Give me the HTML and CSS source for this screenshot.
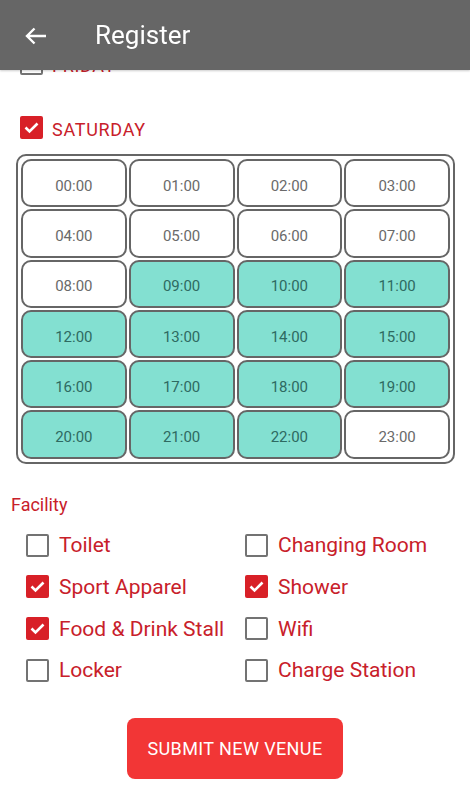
FILE: index.html
```html
<!DOCTYPE html>
<html lang="en">
<head>
  <meta charset="UTF-8" />
  <meta name="viewport" content="width=device-width, initial-scale=1.0"/>
  <title>Register</title>
  <link rel="stylesheet" href="styles.css">
</head>
<body>
  <header class="appbar">
    <svg class="back" width="22" height="18" viewBox="0 0 22 18">
      <path d="M21 9H2M9.5 1.5L2 9l7.5 7.5" fill="none" stroke="#fff" stroke-width="2.4"/>
    </svg>
    <h1>Register</h1>
  </header>

  <main>
    <div class="day">
      <span class="box"></span>
      <span class="day-name">FRIDAY</span>
    </div>

    <div class="day day-sat">
      <span class="box checked">
        <svg width="23" height="23" viewBox="0 0 23 23"><path d="M5.5 11.5l4 4 8-8" fill="none" stroke="#fff" stroke-width="2.6"/></svg>
      </span>
      <span class="day-name">SATURDAY</span>
    </div>

    <div class="hours" id="hours"></div>

    <div class="section-label">Facility</div>
    <div class="facilities">
      <label class="fac"><span class="box"></span>Toilet</label>
      <label class="fac"><span class="box"></span>Changing Room</label>
      <label class="fac"><span class="box checked"><svg width="23" height="23" viewBox="0 0 23 23"><path d="M5.5 11.5l4 4 8-8" fill="none" stroke="#fff" stroke-width="2.6"/></svg></span>Sport Apparel</label>
      <label class="fac"><span class="box checked"><svg width="23" height="23" viewBox="0 0 23 23"><path d="M5.5 11.5l4 4 8-8" fill="none" stroke="#fff" stroke-width="2.6"/></svg></span>Shower</label>
      <label class="fac"><span class="box checked"><svg width="23" height="23" viewBox="0 0 23 23"><path d="M5.5 11.5l4 4 8-8" fill="none" stroke="#fff" stroke-width="2.6"/></svg></span>Food &amp; Drink Stall</label>
      <label class="fac"><span class="box"></span>Wifi</label>
      <label class="fac"><span class="box"></span>Locker</label>
      <label class="fac"><span class="box"></span>Charge Station</label>
    </div>

    <div class="actions">
      <button class="btn">SUBMIT NEW VENUE</button>
    </div>
  </main>

  <script>
    // horas disponibles del sábado
    const abiertas = [9, 10, 11, 12, 13, 14, 15, 16, 17, 18, 19, 20, 21, 22];
    const hours = document.getElementById("hours");
    for (let h = 0; h < 24; h++) {
      const cell = document.createElement("div");
      cell.className = abiertas.includes(h) ? "hour on" : "hour";
      cell.textContent = String(h).padStart(2, "0") + ":00";
      hours.appendChild(cell);
    }
  </script>
</body>
</html>
```

FILE: styles.css
```css
body {
  font-family: Roboto, "Liberation Sans", sans-serif;
  margin: 0;
  background: #ffffff;
  color: #c8202a;
}
.appbar {
  position: fixed;
  top: 0;
  left: 0;
  right: 0;
  height: 70px;
  background: #666666;
  display: flex;
  align-items: center;
  z-index: 2;
  box-shadow: 0 1px 2px rgba(0,0,0,0.2);
}
.back {
  margin-left: 25px;
  margin-top: 1px;
}
.appbar h1 {
  margin: 0 0 0 48px;
  font-size: 26px;
  font-weight: 400;
  color: #ffffff;
}
main {
  padding-top: 52px;
  padding-bottom: 20px;
}
.day {
  display: flex;
  align-items: center;
  gap: 9px;
  margin-left: 20px;
  height: 23px;
}
.day-sat {
  margin-top: 41px;
}
.day-name {
  font-size: 18px;
  letter-spacing: 0.7px;
  padding-top: 3px;
}
.box {
  width: 23px;
  height: 23px;
  box-sizing: border-box;
  border: 2.5px solid #737373;
  border-radius: 2px;
  flex-shrink: 0;
  display: inline-block;
}
.box.checked {
  border: none;
  background: #d82027;
}
.box svg {
  display: block;
}
.hours {
  margin: 15px 0 0 16px;
  width: 439px;
  box-sizing: border-box;
  border: 2px solid #666666;
  border-radius: 10px;
  padding: 3px;
  display: grid;
  grid-template-columns: repeat(4, 1fr);
  gap: 2px;
}
.hour {
  height: 48.3px;
  box-sizing: border-box;
  border: 2.5px solid #666666;
  border-radius: 10px;
  padding-top: 5px;
  display: flex;
  align-items: center;
  justify-content: center;
  font-size: 15px;
  color: #6a6a6a;
  background: #ffffff;
}
.hour.on {
  background: #83e0d1;
  color: #2e6a61;
}
.section-label {
  margin: 30px 0 0 11px;
  font-size: 18px;
}
.facilities {
  margin: 19px 0 0 26px;
  display: grid;
  grid-template-columns: 219px 1fr;
  row-gap: 18.7px;
}
.fac {
  display: flex;
  align-items: center;
  gap: 10px;
  height: 23px;
  font-size: 21px;
}
.actions {
  display: flex;
  justify-content: center;
  margin-top: 36px;
}
.btn {
  width: 216px;
  height: 61px;
  border: none;
  border-radius: 8px;
  background: #f23636;
  color: #ffffff;
  font-family: Roboto, "Liberation Sans", sans-serif;
  font-size: 18px;
  letter-spacing: 0.4px;
}
```
